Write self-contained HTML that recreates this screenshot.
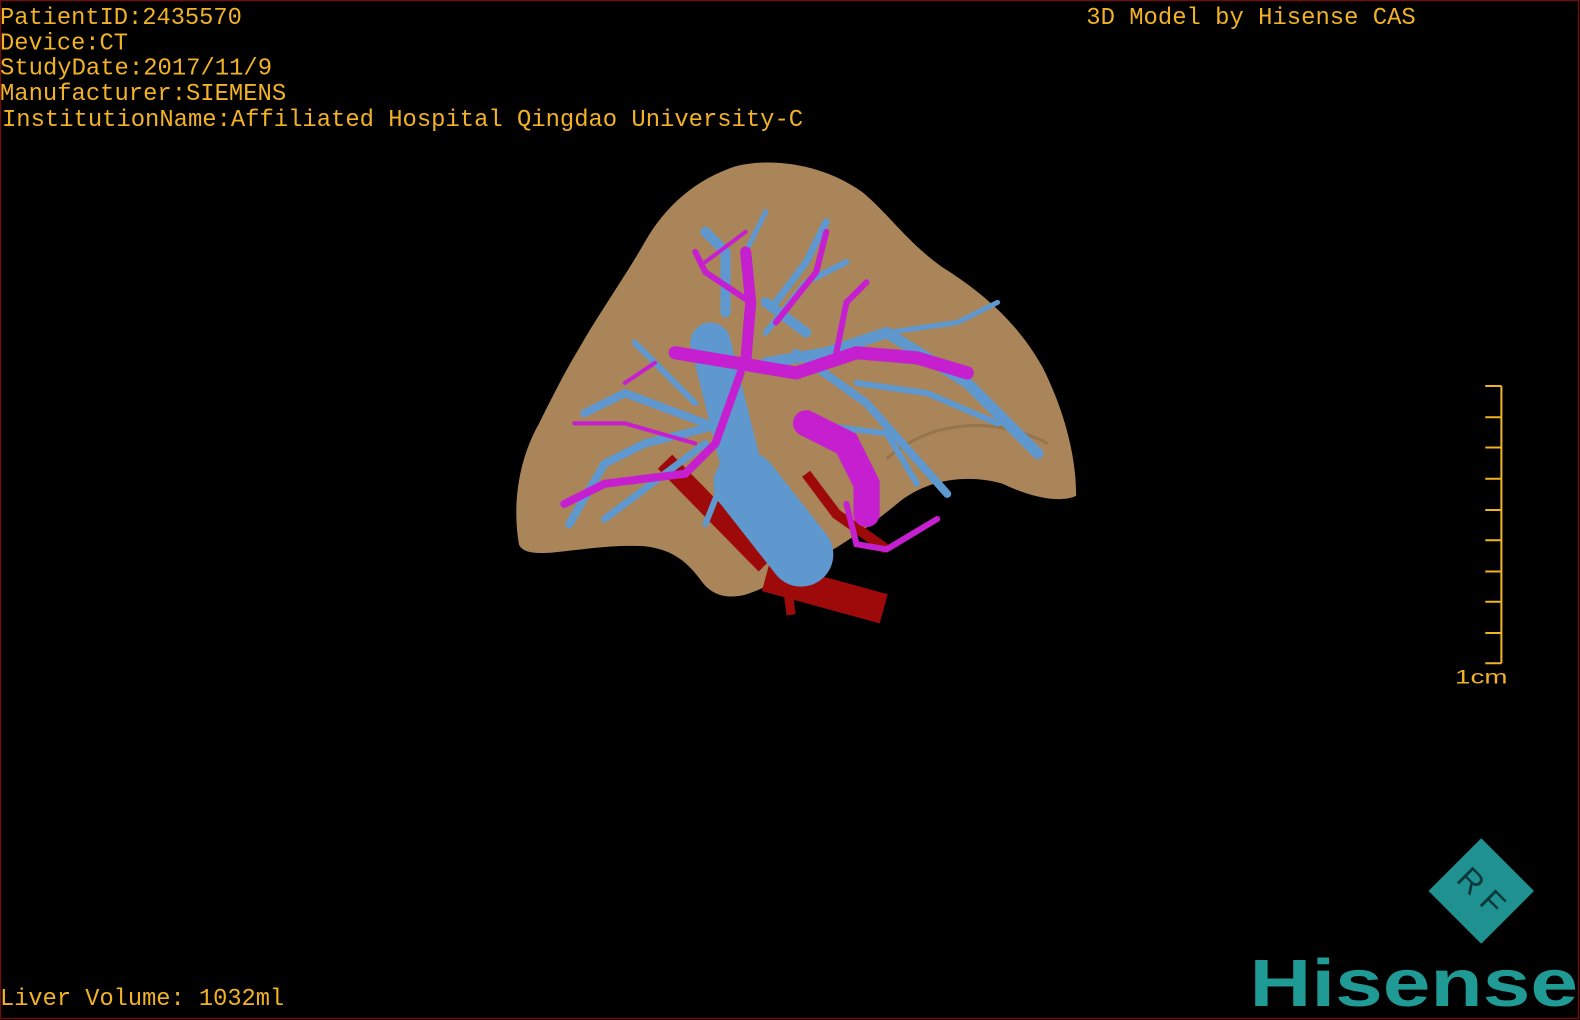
<!DOCTYPE html>
<html><head><meta charset="utf-8"><style>
html,body{margin:0;padding:0;background:#000;width:1580px;height:1020px;overflow:hidden}
svg{display:block}
</style></head><body>
<svg width="1580" height="1020" viewBox="0 0 1568 1012" preserveAspectRatio="none" xmlns="http://www.w3.org/2000/svg">
<rect x="0" y="0" width="1568" height="1012" fill="#000"/>
<rect x="0.5" y="0.5" width="1566" height="1010" fill="none" stroke="#6a1010" stroke-width="1.5"/>
<g font-family="'Liberation Mono', monospace" font-size="24" fill="#f2b225">
<text x="0" y="24" textLength="240" lengthAdjust="spacingAndGlyphs">PatientID:2435570</text>
<text x="0" y="49" textLength="127" lengthAdjust="spacingAndGlyphs">Device:CT</text>
<text x="0" y="74" textLength="270" lengthAdjust="spacingAndGlyphs">StudyDate:2017/11/9</text>
<text x="0" y="99" textLength="284" lengthAdjust="spacingAndGlyphs">Manufacturer:SIEMENS</text>
<text x="2" y="125" textLength="795" lengthAdjust="spacingAndGlyphs">InstitutionName:Affiliated Hospital Qingdao University-C</text>
<text x="1078" y="24" textLength="327" lengthAdjust="spacingAndGlyphs">3D Model by Hisense CAS</text>
<text x="0" y="997" textLength="282" lengthAdjust="spacingAndGlyphs">Liver Volume: 1032ml</text>
</g>
<g stroke="#f2b225" stroke-width="2">
<line x1="1490" y1="383" x2="1490" y2="658"/>
<line x1="1474" y1="383" x2="1490" y2="383"/><line x1="1474" y1="414" x2="1490" y2="414"/>
<line x1="1474" y1="444" x2="1490" y2="444"/><line x1="1474" y1="475" x2="1490" y2="475"/>
<line x1="1474" y1="506" x2="1490" y2="506"/><line x1="1474" y1="536" x2="1490" y2="536"/>
<line x1="1474" y1="567" x2="1490" y2="567"/><line x1="1474" y1="597" x2="1490" y2="597"/>
<line x1="1474" y1="628" x2="1490" y2="628"/><line x1="1474" y1="658" x2="1490" y2="658"/>
</g>
<text x="1444" y="678" font-family="'Liberation Sans',sans-serif" font-size="19" fill="#f2b225" textLength="52" lengthAdjust="spacingAndGlyphs">1cm</text>
<path d="M515,540 C508,500 515,455 535,420 C550,390 560,370 575,345 C595,310 620,275 640,240 C660,205 690,178 730,165 C770,155 820,165 855,190 C880,210 900,240 935,265 C975,290 1010,320 1035,365 C1055,405 1068,450 1068,492 C1050,500 1020,492 995,480 C960,470 920,475 890,500 C860,525 830,545 800,560 C775,575 755,585 740,590 C720,595 705,590 695,575 C680,555 665,545 640,542 C610,540 580,545 550,548 C530,550 518,548 515,540 Z" fill="#a98559"/>
<path d="M880,455 C920,420 980,410 1040,440" fill="none" stroke="#8a6a45" stroke-width="3" opacity="0.6"/>
<g stroke="#9e0a0a" fill="none">
<path d="M760,572 L877,604" stroke-width="30"/>
<path d="M660,458 L760,560" stroke-width="20"/>
<path d="M780,570 L785,610" stroke-width="9"/>
<path d="M800,470 L830,510 L880,545" stroke-width="10"/>
</g>
<g stroke="#5e98cf" stroke-linecap="round" fill="none">
<path d="M705,340 L745,500" stroke-width="40"/>
<path d="M740,480 L795,550" stroke-width="64"/>
<path d="M720,420 L640,440 L600,460 L565,520" stroke-width="8"/>
<path d="M700,420 L620,390 L580,410" stroke-width="8"/>
<path d="M690,400 L630,340" stroke-width="6"/>
<path d="M700,440 L600,515" stroke-width="7"/>
<path d="M720,310 L720,250 L700,230" stroke-width="10"/>
<path d="M740,250 L760,210" stroke-width="5"/>
<path d="M770,300 L800,260 L820,220" stroke-width="7"/>
<path d="M760,360 L820,350 L880,330 L960,380 L1030,450" stroke-width="11"/>
<path d="M790,350 L860,400 L940,490" stroke-width="8"/>
<path d="M850,380 L920,390 L990,420" stroke-width="6"/>
<path d="M760,330 L800,280 L840,260" stroke-width="6"/>
<path d="M720,470 L700,520" stroke-width="6"/>
<path d="M800,420 L880,430 L910,480" stroke-width="6"/>
<path d="M800,330 L760,300" stroke-width="10"/>
<path d="M880,330 L950,320 L990,300" stroke-width="5"/>
</g>
<g stroke="#c51fd0" stroke-linecap="round" fill="none">
<path d="M670,350 L730,360 L790,370 L850,350 L910,355 L960,370" stroke-width="13"/>
<path d="M740,360 L745,300 L740,250" stroke-width="11"/>
<path d="M745,300 L700,270 L690,250" stroke-width="6"/>
<path d="M770,320 L810,270 L820,230" stroke-width="6"/>
<path d="M830,350 L840,300 L860,280" stroke-width="6"/>
<path d="M735,370 L710,440 L680,470 L600,480 L560,500" stroke-width="8"/>
<path d="M690,440 L620,420 L570,420" stroke-width="4"/>
<path d="M800,420 L840,440 L860,480 L860,510" stroke-width="26"/>
<path d="M840,500 L850,540 L880,545 L930,515" stroke-width="6"/>
<path d="M650,360 L620,380" stroke-width="4"/>
<path d="M700,260 L740,230" stroke-width="4"/>
</g>
<g transform="translate(1470,884) rotate(45)">
<rect x="-37" y="-37" width="74" height="74" fill="#1f9190"/>
<text x="0" y="11" font-family="'Liberation Sans',sans-serif" font-size="32" fill="#0a3a3a" text-anchor="middle">R F</text>
</g>
<text x="1240" y="998" font-family="'Liberation Sans',sans-serif" font-weight="bold" font-size="66" fill="#1f9a94" textLength="326" lengthAdjust="spacingAndGlyphs">Hisense</text>
</svg>
</body></html>
